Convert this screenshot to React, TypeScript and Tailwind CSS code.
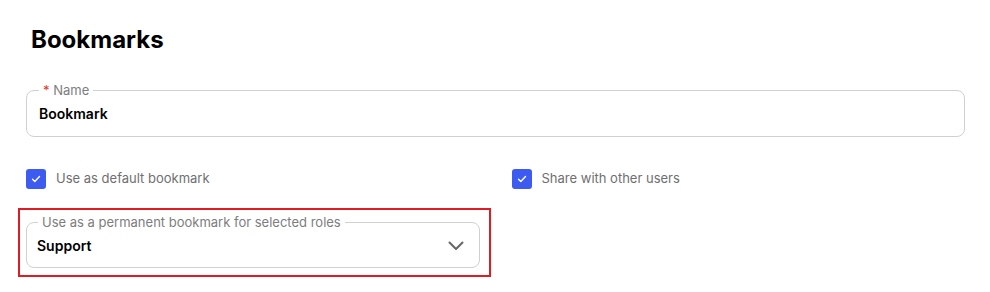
function Checkbox({ label }: { label: string }) {
  return (
    <label className="flex items-center gap-[10px]">
      <span className="flex h-5 w-5 items-center justify-center rounded-[3px] bg-[#3d5af1]">
        <svg className="h-3 w-3" viewBox="0 0 12 12" fill="none" stroke="white" strokeWidth={1.4}>
          <path d="M2.5 6.2l2.3 2.3 4.7-5" strokeLinecap="round" strokeLinejoin="round" />
        </svg>
      </span>
      <span className="text-[13px] text-[#6f6f6f]">{label}</span>
    </label>
  );
}

export default function App() {
  return (
    <div className="h-[292px] w-[990px] bg-white font-['Inter',sans-serif]">
      <div className="pl-[26px] pr-[25px] pt-[24px]">
        <h1 className="pl-[5px] text-[24px] font-bold leading-8 text-black">Bookmarks</h1>

        {/* Name */}
        <fieldset className="mt-[26px] rounded-lg border border-[#d0d0d0] pb-3 pl-[12px] pr-3">
          <legend className="px-1 text-[13px] leading-4 text-[#7d7d7d]">
            <span className="text-[#e5342a]">*</span> Name
          </legend>
          <div className="pt-[6px] text-[14px] font-semibold leading-5 text-black">Bookmark</div>
        </fieldset>

        <div className="mt-[32px] grid grid-cols-2 gap-x-8">
          <Checkbox label="Use as default bookmark" />
          <Checkbox label="Share with other users" />
        </div>

        {/* Permanent bookmark roles */}
        <div className="-ml-2 mt-[19px] w-[473px] border-2 border-[#e21b22] pb-[7px] pl-[6px] pr-[9px] pt-[4px]">
          <fieldset className="rounded-lg border border-[#d0d0d0] pb-[11px] pl-[10px] pr-[15px]">
            <legend className="ml-[1px] px-1 text-[13px] leading-4 text-[#7d7d7d]">
              Use as a permanent bookmark for selected roles
            </legend>
            <div className="flex h-[26px] items-center justify-between pt-[6px]">
              <span className="text-[14px] font-semibold leading-5 text-black">Support</span>
              <svg className="h-[10px] w-4" viewBox="0 0 16 10" fill="none" stroke="#666" strokeWidth={2}>
                <path d="M1.5 1.5l6.5 6.5 6.5-6.5" strokeLinecap="round" strokeLinejoin="round" />
              </svg>
            </div>
          </fieldset>
        </div>
      </div>
    </div>
  );
}
